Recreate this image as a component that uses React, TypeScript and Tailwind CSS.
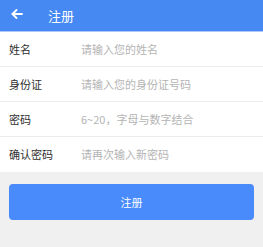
const fields = [
  { label: '姓名', placeholder: '请输入您的姓名', type: 'text' },
  { label: '身份证', placeholder: '请输入您的身份证号码', type: 'text' },
  { label: '密码', placeholder: '6~20，字母与数字结合', type: 'password' },
  { label: '确认密码', placeholder: '请再次输入新密码', type: 'password' },
]

export default function App() {
  return (
    <div
      className="min-h-screen bg-[#f0f0f0]"
      style={{ fontFamily: '"Noto Sans CJK SC", "Noto Sans", sans-serif' }}
    >
      {/* Header */}
      <div className="h-[32px] bg-[#4689f3] flex items-center border-b border-[#a9c8f8]">
        <button className="ml-[11px] mb-[4px] flex items-center text-white">
          <svg width="12" height="10" viewBox="0 0 12 10" fill="none" stroke="currentColor" strokeWidth="1.8" strokeLinecap="round" strokeLinejoin="round">
            <path d="M11 5H1.5" />
            <path d="M5.5 1 1.5 5l4 4" />
          </svg>
        </button>
        <h1 className="ml-[25px] text-[13px] text-white leading-none">注册</h1>
      </div>

      {/* Form */}
      <div className="bg-white">
        {fields.map((f, i) => (
          <div
            key={f.label}
            className={`h-[35px] flex items-center px-[9px] ${
              i < fields.length - 1 ? 'border-b border-[#ececec]' : ''
            }`}
          >
            <label className="w-[72px] shrink-0 text-[11px] text-[#2f2f2f]">{f.label}</label>
            <input
              type="text"
              placeholder={f.placeholder}
              className="flex-1 min-w-0 text-[11px] text-[#333] placeholder:text-[#b4b4b4] outline-none bg-transparent"
            />
          </div>
        ))}
      </div>

      {/* Submit */}
      <div className="px-[9px] pt-[12px]">
        <button className="w-full h-[36px] rounded-[4px] bg-[#4a8bfc] text-white text-[11px]">
          注册
        </button>
      </div>
    </div>
  )
}
